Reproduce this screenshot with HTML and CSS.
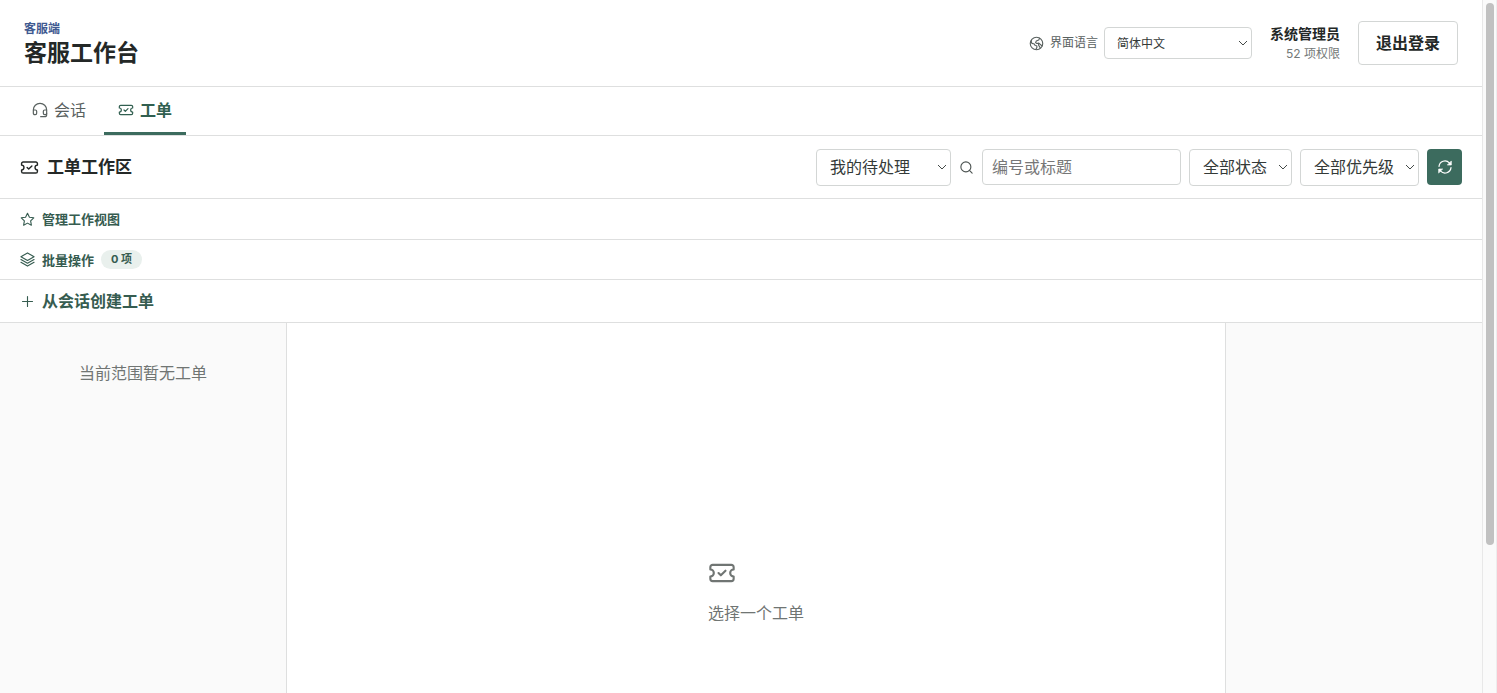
FILE: index.html
```html
<!DOCTYPE html>
<html lang="zh-CN">
<head>
    <meta charset="UTF-8">
    <meta name="viewport" content="width=device-width, initial-scale=1">
    <title>客服工作台</title>
    <link rel="stylesheet" href="styles.css">
</head>
<body>
<svg class="sprite" aria-hidden="true">
    <symbol id="ticket" viewBox="0 0 24 24">
        <path d="M2 9a3 3 0 0 1 0 6v2a2 2 0 0 0 2 2h16a2 2 0 0 0 2-2v-2a3 3 0 0 1 0-6V7a2 2 0 0 0-2-2H4a2 2 0 0 0-2 2Z"/>
        <path d="m9 12 2 2 4-4"/>
    </symbol>
</svg>

<div class="app">
    <header class="header">
        <div class="brand">
            <span class="brand-sub">客服端</span>
            <h1>客服工作台</h1>
        </div>
        <div class="account">
            <div class="language">
                <svg class="icon icon-sm" viewBox="0 0 24 24"><circle cx="12" cy="12" r="10"/><path d="M4 6.500 3.600 9.500l1.200 2.300 3.700 1 1.300 2.400 2.600.4.300 2.300-1.700 3.600M17 3.500l-1.500 3-3.800 1.500-1.200 2.600 2 1.400 3.200-.6 5.300 4.600M15.700 11.400l-.5 3 2.800 4.600"/></svg>
                <label for="language">界面语言</label>
                <span class="select select-lang">
                    <select id="language"><option>简体中文</option></select>
                    <svg class="arrow" viewBox="0 0 10 6"><path d="m1 1 4 4 4-4"/></svg>
                </span>
            </div>
            <div class="user">
                <strong>系统管理员</strong>
                <span>52 项权限</span>
            </div>
            <button class="logout" type="button">退出登录</button>
        </div>
    </header>

    <nav class="tabs">
        <a class="tab" href="#chat">
            <svg class="icon" viewBox="0 0 24 24"><path d="M2 12h3a2 2 0 0 1 2 2v3a2 2 0 0 1-2 2H4a2 2 0 0 1-2-2Zm0 0a10 10 0 0 1 20 0m0 0v5a2 2 0 0 1-2 2h-1a2 2 0 0 1-2-2v-3a2 2 0 0 1 2-2h3Z"/><path d="M22 17v2a3 3 0 0 1-3 3h-6"/></svg>
            会话
        </a>
        <a class="tab active" href="#ticket">
            <svg class="icon"><use href="#ticket"/></svg>
            工单
        </a>
    </nav>

    <section class="toolbar">
        <h2><svg class="icon icon-md"><use href="#ticket"/></svg>工单工作区</h2>
        <form class="filters">
            <span class="select select-view">
                <select aria-label="工作视图"><option>我的待处理</option></select>
                <svg class="arrow" viewBox="0 0 10 6"><path d="m1 1 4 4 4-4"/></svg>
            </span>
            <label class="search">
                <svg class="icon icon-sm" viewBox="0 0 24 24"><circle cx="11" cy="11" r="8"/><path d="m21 21-4.300-4.300"/></svg>
                <input type="text" placeholder="编号或标题" aria-label="编号或标题">
            </label>
            <span class="select select-status">
                <select aria-label="状态"><option>全部状态</option></select>
                <svg class="arrow" viewBox="0 0 10 6"><path d="m1 1 4 4 4-4"/></svg>
            </span>
            <span class="select select-priority">
                <select aria-label="优先级"><option>全部优先级</option></select>
                <svg class="arrow" viewBox="0 0 10 6"><path d="m1 1 4 4 4-4"/></svg>
            </span>
            <button class="refresh" type="button" aria-label="刷新">
                <svg class="icon" viewBox="0 0 24 24"><path d="M3 11a9 9 0 0 1 15.500-5.200L20 7.500M21 13a9 9 0 0 1-15.500 5.200L4 16.500"/><path class="solid" d="M21.500 3.500v5.500H16ZM2.500 20.500V15H8Z"/></svg>
            </button>
        </form>
    </section>

    <button class="row" type="button">
        <svg class="icon icon-sm" viewBox="0 0 24 24"><path d="m12 2 3.100 6.300 6.900 1-5 4.900 1.200 6.900-6.200-3.300-6.200 3.300L7 14.200 2 9.300l6.900-1Z"/></svg>
        管理工作视图
    </button>
    <button class="row row-batch" type="button">
        <svg class="icon icon-sm" viewBox="0 0 24 24"><path d="m12 1.500 10.500 6-10.500 6-10.500-6ZM1.500 12 12 18l10.500-6M1.500 16.500l10.500 6 10.500-6"/></svg>
        批量操作
        <span class="badge">0 项</span>
    </button>
    <button class="row row-create" type="button">
        <svg class="icon icon-sm" viewBox="0 0 24 24"><path d="M4 12h16M12 4v16"/></svg>
        从会话创建工单
    </button>

    <main class="workspace">
        <aside class="list"><p>当前范围暂无工单</p></aside>
        <section class="detail">
            <svg class="icon icon-lg"><use href="#ticket"/></svg>
            <p>选择一个工单</p>
        </section>
        <aside class="side"></aside>
    </main>
</div>
<div class="scrollbar"><div class="thumb"></div></div>
</body>
</html>
```

FILE: styles.css
```css
* {
    box-sizing: border-box;
}
body {
    display: flex;
    height: 100vh;
    margin: 0;
    overflow: hidden;
    background: #fff;
    color: #242827;
    font: 16px/24px Inter, "Noto Sans CJK SC", sans-serif;
}
h1, h2, p {
    margin: 0;
}
button, input, select {
    font: inherit;
    color: inherit;
}
.sprite {
    position: absolute;
    width: 0;
    height: 0;
}
.icon {
    width: 16px;
    height: 16px;
    flex: none;
    fill: none;
    stroke: currentColor;
    stroke-width: 1.8;
    stroke-linecap: round;
    stroke-linejoin: round;
}
.icon-sm {
    width: 15px;
    height: 15px;
}
.icon-md {
    width: 19px;
    height: 19px;
}
.icon-lg {
    width: 28px;
    height: 28px;
}
.solid {
    fill: currentColor;
    stroke-width: 1;
}

.app {
    flex: 1;
    min-width: 0;
    overflow-y: auto;
    scrollbar-width: none;
}

/* 顶部 */
.header {
    display: flex;
    align-items: center;
    justify-content: space-between;
    height: 87px;
    padding: 0 24px;
    border-bottom: 1px solid #dedfdf;
}
.brand {
    display: grid;
    padding-top: 4px;
}
.brand-sub {
    color: #3f5a91;
    font-size: 12px;
    font-weight: 700;
    line-height: 16px;
}
h1 {
    font-size: 23px;
    line-height: 32px;
}
.account {
    display: flex;
    align-items: center;
    gap: 18px;
}
.language {
    display: flex;
    align-items: center;
    gap: 6px;
    color: #59615f;
    font-size: 12px;
}
.user {
    display: grid;
    padding-top: 2px;
    text-align: right;
    line-height: 20px;
}
.user strong {
    font-size: 14px;
}
.user span {
    color: #747978;
    font-size: 12px;
}
.logout {
    height: 44px;
    padding: 0 17px;
    border: 1px solid #d3d6d5;
    border-radius: 4px;
    background: #fff;
    font-weight: 600;
}

/* 下拉框 */
.select {
    position: relative;
    display: flex;
}
.select select {
    width: 100%;
    height: 37px;
    padding: 0 13px;
    border: 1px solid #d3d6d5;
    border-radius: 4px;
    background: #fff;
    color: #343a38;
    appearance: none;
}
.arrow {
    position: absolute;
    top: 50%;
    right: 4px;
    width: 10px;
    height: 6px;
    margin-top: -3px;
    fill: none;
    stroke: #444a48;
    pointer-events: none;
}
.select-lang {
    width: 148px;
}
.select-lang select {
    height: 32px;
    padding: 1px 12px 0;
}
.select-view {
    width: 135px;
}
.select-status {
    width: 103px;
}
.select-priority {
    width: 119px;
}

/* 标签页 */
.tabs {
    display: flex;
    gap: 4px;
    height: 49px;
    padding: 0 18px;
    border-bottom: 1px solid #dedfdf;
}
.tab {
    display: flex;
    align-items: center;
    gap: 6px;
    padding: 0 14px;
    border-bottom: 3px solid transparent;
    color: #59615f;
    text-decoration: none;
}
.tab.active {
    border-color: #3c6b5e;
    color: #315f50;
    font-weight: 700;
}

/* 工具栏 */
.toolbar {
    display: flex;
    align-items: center;
    justify-content: space-between;
    height: 63px;
    padding: 0 20px;
    border-bottom: 1px solid #dedfdf;
}
h2 {
    display: flex;
    align-items: center;
    gap: 8px;
    font-size: 17px;
}
.filters, .search {
    display: flex;
    align-items: center;
    gap: 8px;
}
.search {
    color: #4c5351;
}
.search input {
    width: 199px;
    height: 36px;
    padding: 0 9px;
    border: 1px solid #d3d6d5;
    border-radius: 4px;
}
.search input::placeholder {
    color: #777;
}
.refresh {
    display: grid;
    place-items: center;
    width: 35px;
    height: 36px;
    padding: 0;
    border: 0;
    border-radius: 4px;
    background: #3c6b5e;
    color: #fff;
}

.row {
    display: flex;
    align-items: center;
    gap: 7px;
    width: 100%;
    height: 41px;
    padding: 0 20px;
    border: 0;
    border-bottom: 1px solid #dedfdf;
    background: #fff;
    color: #365c50;
    font-size: 13px;
    font-weight: 700;
}
.row-batch {
    height: 40px;
}
.row-create {
    height: 43px;
    font-size: 16px;
}
.badge {
    padding: 0 10px;
    border-radius: 10px;
    background: #e9f0ed;
    font-size: 11px;
    line-height: 19px;
}

/* 工作区 */
.workspace {
    display: grid;
    grid-template-columns: 287px 1fr 257px;
    min-height: 538px;
    color: #707573;
}
.list {
    padding: 38px 20px;
    border-right: 1px solid #dedfdf;
    background: #fafafa;
    text-align: center;
}
.detail {
    display: grid;
    place-content: center;
    gap: 14px;
}
.side {
    border-left: 1px solid #dedfdf;
    background: #fafafa;
}

.scrollbar {
    flex: none;
    width: 15px;
    padding: 3px 3px 0;
    border-left: 1px solid #e8e8e8;
    border-right: 1px solid #ededed;
    background: #fafafa;
}
.thumb {
    width: 8px;
    height: 78.5%;
    border-radius: 4px;
    background: #c1c1c1;
}
```
